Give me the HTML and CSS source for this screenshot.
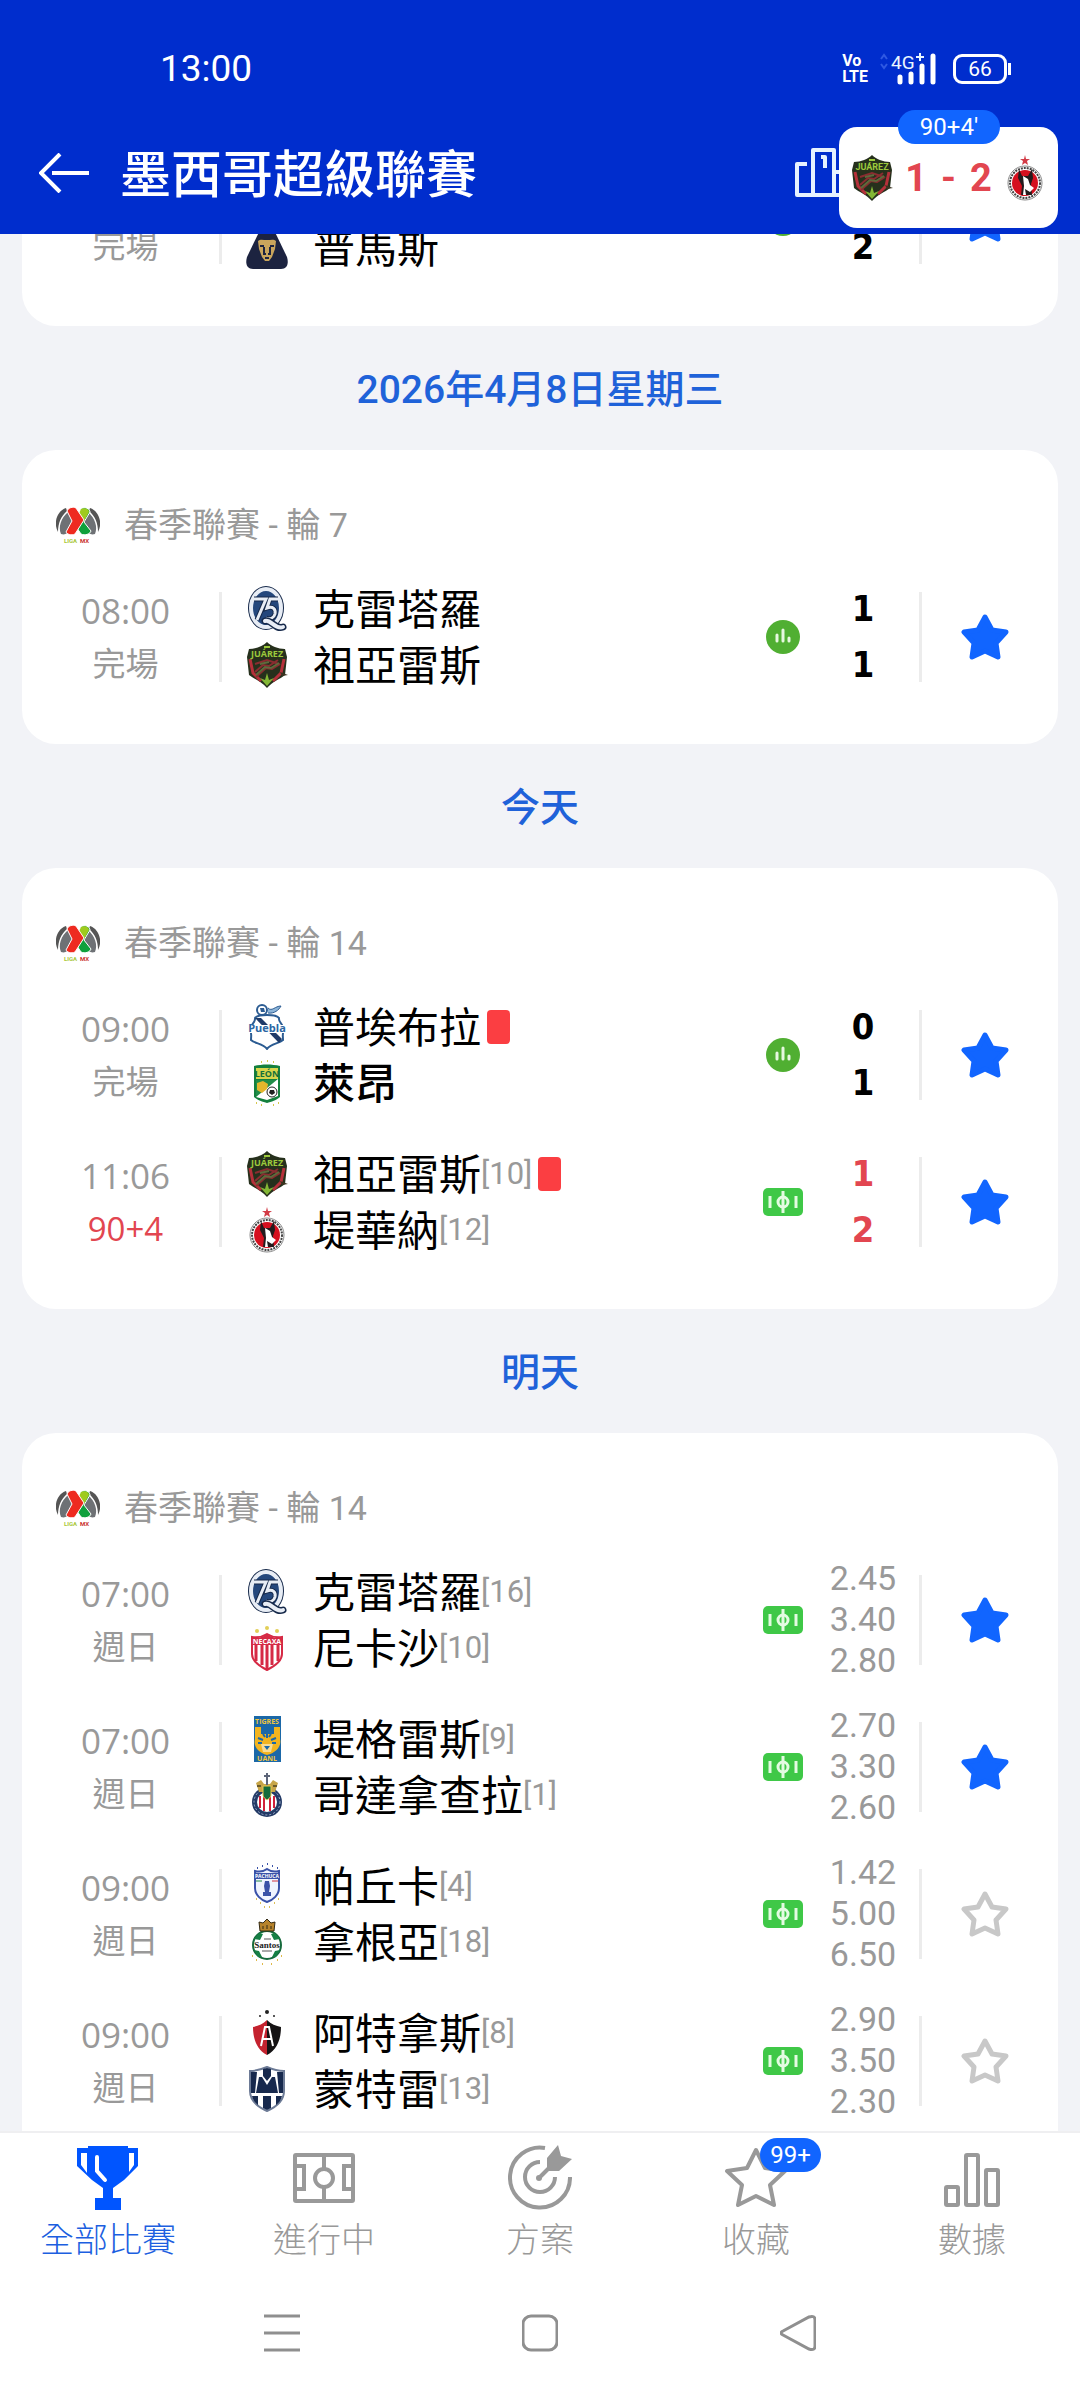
FILE: index.html
```html
<!DOCTYPE html>
<html lang="zh-Hant">
<head>
    <meta charset="UTF-8">
    <meta name="viewport" content="width=device-width, initial-scale=1.0">
    <title>墨西哥超級聯賽</title>
    <link rel="stylesheet" href="styles.css">
</head>
<body>
    <!-- shared icons and club crests -->
    <svg class="sprite" aria-hidden="true">
        <symbol id="star" viewBox="0 0 48 46">
            <path d="M24 3l7 13 14 2-10 11 2 14-13-6-13 6 2-14L3 18l14-2z" stroke-width="5" stroke-linejoin="round"/>
        </symbol>
        <symbol id="stats" viewBox="0 0 34 34">
            <circle cx="17" cy="17" r="17" fill="#50af32"/>
            <path d="M11 15v6M17 10v11M23 18v3" stroke="#e6f8df" stroke-width="3" stroke-linecap="round"/>
        </symbol>
        <symbol id="pitch" viewBox="0 0 40 28">
            <rect width="40" height="28" rx="5" fill="#3fc847"/>
            <path d="M7 8v12M33 8v12M20 3v22" stroke="#e4fbe2" stroke-width="3"/>
            <circle cx="20" cy="14" r="5" fill="none" stroke="#e4fbe2" stroke-width="3"/>
        </symbol>
        <symbol id="liga" viewBox="0 0 44 36">
            <path d="M10 1C1 4-3 16 2 25 2 16 5 9 11 4z" fill="#555"/>
            <path d="M12 5C5 11 2 20 5 27q6 2 9-5l6-9-6-9z" fill="#6e7175"/>
            <path d="M34 1c9 3 13 15 8 24 0-9-3-16-9-21z" fill="#555"/>
            <path d="M32 5c7 6 10 15 7 22q-6 2-9-5l-6-9 6-9z" fill="#6e7175"/>
            <path d="M25 2c4-3 9 0 9 3l-6 10 7 9c-1 3-6 5-10 3l-6-9z" fill="#0fa03c" stroke="#fff"/>
            <path d="M25 2c4-2 8 0 8 3l-5 9-6-5z" fill="#9fca1e"/>
            <path d="M11 4c1-3 6-5 9-3l8 12-9 14c-4 2-8 0-9-2l6-11z" fill="#ee2a20" stroke="#fff"/>
            <text x="8" y="36" font-size="6" font-weight="700" fill="#a9c83a">LIGA</text>
            <text x="24" y="36" font-size="6" font-weight="700" fill="#c9302c">MX</text>
        </symbol>
        <symbol id="queretaro" viewBox="0 0 46 46">
            <ellipse cx="22" cy="22" rx="18" ry="22" fill="#16294a"/>
            <ellipse cx="22" cy="22" rx="15" ry="19" fill="#24477c" stroke="#e8edf5" stroke-width="4"/>
            <path d="M10 13h12L13 34M34 13h-8l-3 9c6-2 9 1 8 6-1 4-5 6-9 4" fill="none" stroke="#16294a" stroke-width="5"/>
            <path d="M10 13h12L13 34M34 13h-8l-3 9c6-2 9 1 8 6-1 4-5 6-9 4" fill="none" stroke="#e8edf5" stroke-width="3"/>
            <path d="M21 35c6-2 10 9 18 6" fill="none" stroke="#16294a" stroke-width="7" stroke-linecap="round"/>
            <path d="M21 35c6-2 10 9 18 6" fill="none" stroke="#e8edf5" stroke-width="4" stroke-linecap="round"/>
        </symbol>
        <symbol id="juarez" viewBox="0 0 46 46">
            <path d="M23 0c-4 4-11 7-18 7l-2 8 2 18c5 4 13 7 18 13 5-6 13-9 18-13l2-18-2-8C34 7 27 4 23 0z" fill="#26301c"/>
            <path d="M6 17l3 14 8 8M40 17l-3 14-8 8" fill="none" stroke="#b5303a" stroke-width="3"/>
            <path d="M11 22l12-4 12 4M11 30l8-7 6 1 9-6M12 35l10-9 6 1 8-5" fill="none" stroke="#8a2c30" stroke-width="2"/>
            <path d="M12 33l9-8 6 1 8-5M16 22l9-2" fill="none" stroke="#5e6a3c" stroke-width="2"/>
            <path d="M23 44l-7-8 5 2 2-7 2 7 5-2z" fill="#83b735"/>
            <path d="M36 30l8 3-6 1z" fill="#3b3420"/>
            <text x="23" y="15" font-size="9" font-weight="700" fill="#9cc93c" text-anchor="middle">JUÁREZ</text>
            <path d="M20 5h6" stroke="#9cc93c" stroke-width="2"/>
        </symbol>
        <symbol id="puebla" viewBox="0 0 46 46">
            <path d="M23 11c-5 0-10 0-12 3 1 5-5 6-5 12 2 3 1 6 1 10 4 4 12 3 16 9 4-6 12-5 16-9 0-4-1-7 1-10 0-6-6-7-5-12-2-3-7-3-12-3z" fill="#fff" stroke="#2c5c92" stroke-width="2"/>
            <path d="M11 14h6l21 21-3 4z" fill="#1f3a68"/>
            <path d="M5 21h37v8H5z" fill="#fff"/>
            <circle cx="18" cy="6" r="5" fill="#fff" stroke="#2c5c92" stroke-width="2"/>
            <path d="M16 4h4l1 4h-4z" fill="#2c5c92"/>
            <path d="M24 4c4 4 7-2 13-2-2 4-7 8-13 7" fill="#8cb4d8" stroke="#2c5c92"/>
            <text x="23" y="28" font-size="11" font-weight="700" fill="#2a66a4" text-anchor="middle">Puebla</text>
        </symbol>
        <symbol id="leon" viewBox="0 0 46 46">
            <path d="M10 6c8-2 18-2 26 0v31c-3 3-9 5-13 6-4-1-10-3-13-6z" fill="#14803d"/>
            <path d="M12 20h22v15c-4 3-8 4-11 5-4-1-8-2-11-5z" fill="#208c48"/>
            <path d="M34 19v17l-11 4-11-3z" fill="#fff"/>
            <rect x="12" y="8" width="22" height="11" fill="#d8d44a"/>
            <text x="23" y="17" font-size="9" font-weight="700" fill="#14703a" text-anchor="middle">LEÓN</text>
            <path d="M13 23l6-2 5 3-1 5-5 4-5-3z" fill="#e3b62c"/>
            <circle cx="28" cy="32" r="5" fill="#fff" stroke="#222"/>
            <path d="M26 30h4l1 3-3 2-3-2z" fill="#222"/>
            <path d="M17 2h1M23 1h1M29 2h1M12 43h1M17 45h1M29 45h1M34 43h1" stroke="#d5c84c" stroke-width="2"/>
        </symbol>
        <symbol id="tijuana" viewBox="0 0 46 46">
            <path d="M23 0l1 4h4l-3 2 1 4-3-2-3 2 1-4-3-2h4z" fill="#d23b46"/>
            <circle cx="23" cy="28" r="17" fill="#fff" stroke="#888"/>
            <circle cx="23" cy="28" r="15" fill="none" stroke="#444" stroke-width="2" stroke-dasharray="2 1"/>
            <circle cx="23" cy="28" r="13" fill="#d5101f"/>
            <path d="M17 14l3 7h6l4-7 1 9-2 6 1 11h-11l1-9-4-8z" fill="#231b1d"/>
            <path d="M21 21l5 3 2 6 4 3-4 4-5-3 1 6h-3l1-9z" fill="#fff"/>
        </symbol>
        <symbol id="necaxa" viewBox="0 0 46 46">
            <path d="M23 9c-5 3-10 4-15 3v17c0 8 9 13 15 16 6-3 15-8 15-16V12c-5 1-10 0-15-3z" fill="#fff" stroke="#d62a45" stroke-width="2"/>
            <path d="M12 18v18M18 18v22M23 18v26M28 18v22M34 18v18" stroke="#d62a45" stroke-width="3"/>
            <path d="M8 13c5 0 10 0 15-4 5 4 10 4 15 4v7H8z" fill="#d62a45"/>
            <text x="23" y="19" font-size="7" font-weight="700" fill="#fff" text-anchor="middle">NECAXA</text>
            <g fill="#e2cf57"><circle cx="13" cy="6" r="2"/><circle cx="23" cy="3" r="2"/><circle cx="33" cy="6" r="2"/></g>
        </symbol>
        <symbol id="tigres" viewBox="0 0 46 46">
            <rect x="10" y="0" width="27" height="46" fill="#1b68a8"/>
            <path d="M11 11h6v7h13v-7h6v12c2 8-5 14-13 16-8-2-14-8-12-16z" fill="#f2b41f"/>
            <path d="M14 22l5 2M32 22l-5 2M14 27h4M32 27h-4M23 17v5M19 18l2 3M27 18l-2 3" stroke="#1b68a8" stroke-width="2"/>
            <path d="M17 28h12l-2 8h-8z" fill="#f8dc93"/>
            <path d="M20 30h6l-3 4z" fill="#1b68a8"/>
            <text x="23" y="8" font-size="7" font-weight="700" fill="#f2c53c" text-anchor="middle">TIGRES</text>
            <text x="23" y="45" font-size="7" font-weight="700" fill="#f2c53c" text-anchor="middle">UANL</text>
        </symbol>
        <symbol id="chivas" viewBox="0 0 46 46">
            <circle cx="23" cy="30" r="15" fill="#233a66"/>
            <circle cx="23" cy="30" r="13" fill="none" stroke="#9fb0cc" stroke-dasharray="2 2"/>
            <circle cx="23" cy="30" r="10" fill="#fff"/>
            <path d="M16 24v12M20 22v17M26 22v17M30 24v12" stroke="#d0203a" stroke-width="2"/>
            <path d="M12 11l5-3 3 4h6l3-4 5 3-3 9H15z" fill="#c7a548"/>
            <path d="M13 14h4M29 14h4" stroke="#6b5a2a" stroke-width="2"/>
            <path d="M19 14h8v8c0 4-3 5-4 6-1-1-4-2-4-6z" fill="#146b3a" stroke="#e7c750"/>
            <path d="M23 1v12M20 4h6" stroke="#5d6578" stroke-width="2"/>
        </symbol>
        <symbol id="pachuca" viewBox="0 0 46 46">
            <path d="M23 6c-4 3-8 3-12 2v17c0 7 6 12 12 14 6-2 12-7 12-14V8c-4 1-8 1-12-2z" fill="#f0f4ff" stroke="#3a52a8" stroke-width="2"/>
            <path d="M12 10h22v6H12z" fill="#3a52a8"/>
            <text x="23" y="15" font-size="5" font-weight="700" fill="#fff" text-anchor="middle">PACHUCA</text>
            <path d="M12 18h6" stroke="#238a4b"/><path d="M28 18h6" stroke="#cf3340"/>
            <path d="M21 18h4l1 5-1 6h2v4h-8v-4h2l-1-6z" fill="#3a52a8"/>
            <path d="M13 5h1M18 3h1M23 1h1M28 3h1M33 5h1" stroke="#3a52a8" stroke-width="2"/>
            <path d="M12 36h1M16 40h1M20 44h1M25 44h1M30 40h1M34 36h1" stroke="#dcc05a" stroke-width="2"/>
        </symbol>
        <symbol id="santos" viewBox="0 0 46 46">
            <circle cx="23" cy="26" r="14" fill="#fff" stroke="#166a3c" stroke-width="2"/>
            <path d="M10 20l5-6 4 1-3 6zM36 20l-5-6-4 1 3 6zM10 31l5 1 3 6h-4zM36 31l-5 1-3 6h4z" fill="#168045"/>
            <path d="M15 3l4 1 4-4 4 4 4-1-1 9H16z" fill="#b7832b" stroke="#332a14"/>
            <path d="M19 7v3M23 6v4M27 7v3" stroke="#332a14"/>
            <text class="serif" x="23" y="29" font-size="9" font-weight="700" fill="#222" text-anchor="middle">Santos</text>
            <path d="M18 32h10M20 20h7" stroke="#555"/>
            <path d="M8 37h1M12 41h1M18 45h1M27 45h1M33 41h1M37 37h1" stroke="#e0b94a" stroke-width="2"/>
        </symbol>
        <symbol id="atlas" viewBox="0 0 46 46">
            <path d="M23 10c-4 4-9 6-14 7 0 12 4 23 14 28z" fill="#c4232f"/>
            <path d="M23 10c4 4 9 6 14 7 0 12-4 23-14 28z" fill="#151314"/>
            <path d="M17 36l4-19h4l4 19M18 29h10" fill="none" stroke="#fff" stroke-width="2"/>
            <g fill="#222"><circle cx="16" cy="6" r="1"/><circle cx="23" cy="2" r="2"/><circle cx="30" cy="6" r="1"/></g>
        </symbol>
        <symbol id="monterrey" viewBox="0 0 46 46">
            <path d="M23 1C16 4 11 5 6 5v20c0 10 8 16 17 20 9-4 17-10 17-20V5c-5 0-10-1-17-4z" fill="#fff" stroke="#6d7b96" stroke-width="2"/>
            <path d="M7 6h6l-2 21H7zM39 6h-6l2 21h4zM19 3l4-1 4 1v7l-4 5-4-5zM15 11h3l5 8 5-8h3l3 16H12zM8 30h6v9c-3-2-5-5-6-9zM38 30h-6v9c3-2 5-5 6-9zM19 30h8v12l-4 2-4-2z" fill="#17294d"/>
        </symbol>
        <symbol id="pumas" viewBox="0 0 46 46">
            <path d="M17 4c3-5 9-5 12 0l14 29c2 7 0 12-6 12H9c-6 0-8-5-6-12z" fill="#1c2340"/>
            <path d="M14 17c2-2 5-1 9-1s7-1 9 1l-1 8-3 8-3 4h-4l-3-4-3-8z" fill="#c9a55c"/>
            <path d="M20 23v7h2M26 23v7h-2M16 22h4M26 22h4M21 34h4" fill="none" stroke="#1c2340" stroke-width="2"/>
        </symbol>
    </svg>

    <header class="topbar">
        <div class="status-bar">
            <span class="clock">13:00</span>
            <div class="status-icons">
                <span class="volte">Vo<br>LTE</span>
                <svg class="signal" width="57" height="36" viewBox="0 0 57 36" role="img" aria-label="4G+">
                    <path d="M1 8l3-4 3 4M1 13l3 4 3-4" fill="none" stroke="#2f59e2" stroke-width="2"/>
                    <text x="11" y="18" font-size="19" fill="#e9f6ff">4G</text>
                    <path d="M40 2v8M36 6h8" stroke="#e9f6ff" stroke-width="2"/>
                    <path d="M20 26v5M31 23v8M42 15v16M53 5v26" stroke="#fff" stroke-width="5" stroke-linecap="round"/>
                </svg>
                <span class="battery">66</span>
            </div>
        </div>
        <div class="title-bar">
            <button class="back" aria-label="返回">
                <svg width="50" height="40" viewBox="0 0 50 40"><path d="M21 1L2 20l19 19M13 20h37" fill="none" stroke="#fff" stroke-width="4"/></svg>
            </button>
            <h1>墨西哥超級聯賽</h1>
            <button class="ranking" aria-label="積分榜">
                <svg width="60" height="50" viewBox="0 0 60 50">
                    <path d="M12 16H2v31h56V24H40M18 47V2h21v45M26 9h4v11" fill="none" stroke="#e6f2ff" stroke-width="4" stroke-linejoin="round"/>
                </svg>
            </button>
        </div>
        <div class="live-score">
            <span class="live-minute">90+4'</span>
            <svg class="crest"><use href="#juarez"/></svg>
            <strong><span>1</span><span>-</span><span>2</span></strong>
            <svg class="crest"><use href="#tijuana"/></svg>
        </div>
    </header>

    <main>
        <section class="card">
            <div class="match">
                <div class="time"><span></span><span>完場</span></div>
                <div class="teams">
                    <div class="team"></div>
                    <div class="team"><svg class="crest"><use href="#pumas"/></svg>普馬斯</div>
                </div>
                <div class="info"><svg class="stats"><use href="#stats"/></svg></div>
                <div class="score"><span></span><span>2</span></div>
                <button class="fav on" aria-label="收藏"><svg><use href="#star"/></svg></button>
            </div>
        </section>

        <h2>2026年4月8日星期三</h2>
        <section class="card">
            <h3><svg><use href="#liga"/></svg>春季聯賽 - 輪 7</h3>
            <div class="match">
                <div class="time"><span>08:00</span><span>完場</span></div>
                <div class="teams">
                    <div class="team"><svg class="crest"><use href="#queretaro"/></svg>克雷塔羅</div>
                    <div class="team"><svg class="crest"><use href="#juarez"/></svg>祖亞雷斯</div>
                </div>
                <div class="info"><svg class="stats"><use href="#stats"/></svg></div>
                <div class="score"><span>1</span><span>1</span></div>
                <button class="fav on" aria-label="收藏"><svg><use href="#star"/></svg></button>
            </div>
        </section>

        <h2>今天</h2>
        <section class="card">
            <h3><svg><use href="#liga"/></svg>春季聯賽 - 輪 14</h3>
            <div class="match">
                <div class="time"><span>09:00</span><span>完場</span></div>
                <div class="teams">
                    <div class="team"><svg class="crest"><use href="#puebla"/></svg>普埃布拉<i class="red-card"></i></div>
                    <div class="team winner"><svg class="crest"><use href="#leon"/></svg>萊昂</div>
                </div>
                <div class="info"><svg class="stats"><use href="#stats"/></svg></div>
                <div class="score"><span>0</span><span>1</span></div>
                <button class="fav on" aria-label="收藏"><svg><use href="#star"/></svg></button>
            </div>
            <div class="match live">
                <div class="time"><span>11:06</span><span>90+4</span></div>
                <div class="teams">
                    <div class="team"><svg class="crest"><use href="#juarez"/></svg>祖亞雷斯<small>[10]</small><i class="red-card"></i></div>
                    <div class="team"><svg class="crest"><use href="#tijuana"/></svg>堤華納<small>[12]</small></div>
                </div>
                <div class="info"><svg class="pitch"><use href="#pitch"/></svg></div>
                <div class="score"><span>1</span><span>2</span></div>
                <button class="fav on" aria-label="收藏"><svg><use href="#star"/></svg></button>
            </div>
        </section>

        <h2>明天</h2>
        <section class="card">
            <h3><svg><use href="#liga"/></svg>春季聯賽 - 輪 14</h3>
            <div class="match">
                <div class="time"><span>07:00</span><span>週日</span></div>
                <div class="teams">
                    <div class="team"><svg class="crest"><use href="#queretaro"/></svg>克雷塔羅<small>[16]</small></div>
                    <div class="team"><svg class="crest"><use href="#necaxa"/></svg>尼卡沙<small>[10]</small></div>
                </div>
                <div class="info"><svg class="pitch"><use href="#pitch"/></svg></div>
                <div class="odds"><span>2.45</span><span>3.40</span><span>2.80</span></div>
                <button class="fav on" aria-label="收藏"><svg><use href="#star"/></svg></button>
            </div>
            <div class="match">
                <div class="time"><span>07:00</span><span>週日</span></div>
                <div class="teams">
                    <div class="team"><svg class="crest"><use href="#tigres"/></svg>堤格雷斯<small>[9]</small></div>
                    <div class="team"><svg class="crest"><use href="#chivas"/></svg>哥達拿查拉<small>[1]</small></div>
                </div>
                <div class="info"><svg class="pitch"><use href="#pitch"/></svg></div>
                <div class="odds"><span>2.70</span><span>3.30</span><span>2.60</span></div>
                <button class="fav on" aria-label="收藏"><svg><use href="#star"/></svg></button>
            </div>
            <div class="match">
                <div class="time"><span>09:00</span><span>週日</span></div>
                <div class="teams">
                    <div class="team"><svg class="crest"><use href="#pachuca"/></svg>帕丘卡<small>[4]</small></div>
                    <div class="team"><svg class="crest"><use href="#santos"/></svg>拿根亞<small>[18]</small></div>
                </div>
                <div class="info"><svg class="pitch"><use href="#pitch"/></svg></div>
                <div class="odds"><span>1.42</span><span>5.00</span><span>6.50</span></div>
                <button class="fav" aria-label="收藏"><svg><use href="#star"/></svg></button>
            </div>
            <div class="match">
                <div class="time"><span>09:00</span><span>週日</span></div>
                <div class="teams">
                    <div class="team"><svg class="crest"><use href="#atlas"/></svg>阿特拿斯<small>[8]</small></div>
                    <div class="team"><svg class="crest"><use href="#monterrey"/></svg>蒙特雷<small>[13]</small></div>
                </div>
                <div class="info"><svg class="pitch"><use href="#pitch"/></svg></div>
                <div class="odds"><span>2.90</span><span>3.50</span><span>2.30</span></div>
                <button class="fav" aria-label="收藏"><svg><use href="#star"/></svg></button>
            </div>
        </section>
    </main>

    <footer>
        <nav class="tabs">
            <a href="#" class="active">
                <svg width="64" height="66" viewBox="0 0 64 66">
                    <path d="M12 2h40v2h10v18L48 36 37 44v10h8v12H19V54h8V44L16 36 1 22V4h11z" fill="#0055ff"/>
                    <path d="M5 9h6v20l-6-8zM53 9h5v12l-5 7z" fill="#fff"/>
                    <path d="M21 13v14l8 9" fill="none" stroke="#fff" stroke-width="4" stroke-linecap="round"/>
                </svg>
                全部比賽
            </a>
            <a href="#">
                <svg width="64" height="66" viewBox="0 0 64 66" class="line">
                    <rect x="3" y="11" width="58" height="46" rx="1"/>
                    <path d="M32 11v13M32 44v13M3 22h9v23H3M61 22h-9v23h9"/>
                    <circle cx="32" cy="34" r="9"/>
                </svg>
                進行中
            </a>
            <a href="#">
                <svg width="64" height="66" viewBox="0 0 64 66" class="line">
                    <path d="M37 4a30 30 0 1 0 25 29M32 18a15 15 0 1 0 15 15"/>
                    <circle cx="31" cy="34" r="3" class="solid"/>
                    <path d="M32 33l14-14"/>
                    <path d="M39 14L50 1l3 11 11 3-13 12H39z" class="solid"/>
                </svg>
                方案
            </a>
            <a href="#">
                <svg width="64" height="66" viewBox="0 0 64 66" class="line">
                    <path d="M32 6l9 18 20 3-15 14 4 20-18-9-18 9 4-20L3 27l20-3z" stroke-linejoin="round"/>
                </svg>
                <span class="badge">99+</span>
                收藏
            </a>
            <a href="#">
                <svg width="64" height="66" viewBox="0 0 64 66" class="line">
                    <rect x="6" y="43" width="12" height="18" rx="1"/>
                    <rect x="26" y="11" width="12" height="50" rx="1"/>
                    <rect x="46" y="26" width="12" height="35" rx="1"/>
                </svg>
                數據
            </a>
        </nav>
        <div class="system-nav">
            <button aria-label="最近"><svg width="36" height="38" viewBox="0 0 36 38"><path d="M0 2h36M0 19h36M0 36h36"/></svg></button>
            <button aria-label="主頁"><svg width="36" height="38" viewBox="0 0 36 38"><rect x="1" y="2" width="34" height="34" rx="8"/></svg></button>
            <button aria-label="返回上頁"><svg width="36" height="38" viewBox="0 0 36 38"><path d="M3 17L29 3q6-2 6 3v26q0 5-6 3L3 21q-4-2 0-4z"/></svg></button>
        </div>
    </footer>
</body>
</html>
```

FILE: styles.css
```css
:root {
    --header: #002dcd;
    --blue: #1165ff;
    --title: #1f62d9;
    --red: #e24650;
    --gray: #999;
    --line: #ececec;
    --background: #f2f3f7;
}

* {
    margin: 0;
    padding: 0;
    box-sizing: border-box;
}

body {
    font-family: 'Open Sans', 'Noto Sans CJK TC', sans-serif;
    background: var(--background);
    color: #000;
    height: 100vh;
    overflow: hidden;
    display: flex;
    flex-direction: column;
}

button {
    background: none;
    border: none;
    cursor: pointer;
}

svg {
    display: block;
    flex: none;
}

.sprite {
    display: none;
}

.serif {
    font-family: 'Liberation Serif', serif;
}

/* header */
.topbar {
    position: relative;
    z-index: 2;
    flex: none;
    height: 234px;
    background: var(--header);
    color: #fff;
}

.status-bar {
    display: flex;
    justify-content: space-between;
    align-items: center;
    padding: 44px 68px 0 160px;
    font-family: Roboto, sans-serif;
}

.clock {
    font-size: 37px;
    line-height: 50px;
}

.status-icons {
    display: flex;
    align-items: center;
}

.volte {
    font-size: 16px;
    line-height: 16px;
    font-weight: 700;
    margin-right: 12px;
}

.battery {
    position: relative;
    width: 54px;
    height: 30px;
    margin-left: 16px;
    margin-right: 5px;
    border: 3px solid #fff;
    border-radius: 9px;
    font-size: 21px;
    line-height: 24px;
    text-align: center;
}

.battery::after {
    content: '';
    position: absolute;
    right: -7px;
    top: 6px;
    width: 3px;
    height: 12px;
    background: #fff;
}

.title-bar {
    display: flex;
    align-items: center;
    padding: 43px 225px 0 39px;
}

.title-bar h1 {
    flex: 1;
    margin-left: 31px;
    font-size: 51px;
    line-height: 72px;
    font-weight: 500;
}

.live-score {
    position: absolute;
    right: 22px;
    top: 127px;
    width: 219px;
    height: 101px;
    padding: 0 10px;
    background: #fff;
    border-radius: 18px;
    display: flex;
    align-items: center;
    justify-content: space-between;
    color: var(--red);
    font-family: Roboto, sans-serif;
}

.live-score strong {
    display: flex;
    gap: 14px;
    font-size: 38px;
    line-height: 44px;
}

.live-minute {
    position: absolute;
    left: 59px;
    top: -17px;
    width: 102px;
    border-radius: 17px;
    background: var(--blue);
    color: #fff;
    font-size: 24px;
    line-height: 34px;
    text-align: center;
}

.crest {
    width: 46px;
    height: 46px;
}

/* match list, scrolled part of the way under the header */
main {
    flex: 1;
    min-height: 0;
    margin-top: -89px;
    padding: 0 22px;
}

h2 {
    padding: 36px 0 32px;
    color: var(--title);
    font-family: Roboto, 'Noto Sans CJK TC', sans-serif;
    font-size: 39px;
    line-height: 56px;
    font-weight: 500;
    text-align: center;
}

.card {
    background: #fff;
    border-radius: 34px;
    padding: 0 10px 34px 0;
}

.card h3 {
    display: flex;
    align-items: center;
    gap: 24px;
    padding: 47px 0 10px 34px;
    color: var(--gray);
    font-family: Roboto, 'Noto Sans CJK TC', sans-serif;
    font-size: 34px;
    line-height: 56px;
    font-weight: 400;
}

.card h3 svg {
    width: 44px;
    height: 36px;
}

.match {
    display: flex;
    align-items: center;
    height: 147px;
}

.time {
    width: 197px;
    padding-left: 10px;
    display: flex;
    flex-direction: column;
    color: var(--gray);
    font-size: 35px;
    line-height: 53px;
    text-align: center;
}

.time span {
    height: 53px;
}

.time span + span {
    font-size: 33px;
}

.live .time span + span,
.live .score {
    color: var(--red);
}

.teams {
    flex: 1;
    height: 90px;
    padding-left: 22px;
    border-left: 3px solid var(--line);
    display: flex;
    flex-direction: column;
    justify-content: center;
}

.team {
    flex: none;
    display: flex;
    align-items: center;
    height: 56px;
    font-size: 42px;
    line-height: 56px;
    white-space: nowrap;
}

.team .crest {
    margin-right: 23px;
}

.winner {
    font-weight: 500;
}

.team small {
    color: var(--gray);
    font-family: Roboto, sans-serif;
    font-size: 31px;
    font-weight: 400;
}

.red-card {
    width: 23px;
    height: 34px;
    margin-left: 6px;
    border-radius: 4px;
    background: #fb3e42;
}

.info {
    width: 48px;
    display: flex;
    justify-content: center;
}

.stats {
    width: 34px;
    height: 34px;
}

.pitch {
    width: 40px;
    height: 28px;
}

.score,
.odds {
    width: 112px;
    display: flex;
    flex-direction: column;
    text-align: center;
}

.score {
    font-family: 'DejaVu Sans Condensed', 'DejaVu Sans', sans-serif;
    font-size: 36px;
    font-weight: 700;
    line-height: 56px;
}

.score span {
    height: 56px;
}

.odds {
    color: var(--gray);
    font-family: Roboto, sans-serif;
    font-size: 34px;
    line-height: 41px;
}

.fav {
    width: 129px;
    height: 90px;
    border-left: 3px solid var(--line);
    display: flex;
    align-items: center;
    justify-content: center;
}

.fav svg {
    width: 48px;
    height: 46px;
    fill: none;
    stroke: #c8c8c8;
}

.fav.on svg {
    fill: var(--blue);
    stroke: var(--blue);
}

/* bottom navigation */
footer {
    position: relative;
    z-index: 2;
    flex: none;
    background: #fff;
    border-top: 2px solid #efeff1;
}

.tabs {
    display: grid;
    grid-template-columns: repeat(5, 1fr);
}

.tabs a {
    position: relative;
    display: flex;
    flex-direction: column;
    align-items: center;
    gap: 1px;
    padding-top: 11px;
    color: var(--gray);
    font-size: 34px;
    font-weight: 300;
    line-height: 56px;
    text-decoration: none;
}

.tabs .active {
    color: #1c5fe0;
}

.line {
    fill: none;
    stroke: var(--gray);
    stroke-width: 4;
}

.solid {
    fill: var(--gray);
    stroke: none;
}

.badge {
    position: absolute;
    left: 112px;
    top: 5px;
    width: 61px;
    border-radius: 17px;
    background: var(--blue);
    color: #fff;
    font-family: Roboto, sans-serif;
    font-size: 24px;
    font-weight: 400;
    line-height: 34px;
    text-align: center;
}

.system-nav {
    display: flex;
    justify-content: center;
    gap: 222px;
    padding: 47px 0 48px;
}

.system-nav svg {
    fill: none;
    stroke: #8f8f8f;
    stroke-width: 3;
}
```
